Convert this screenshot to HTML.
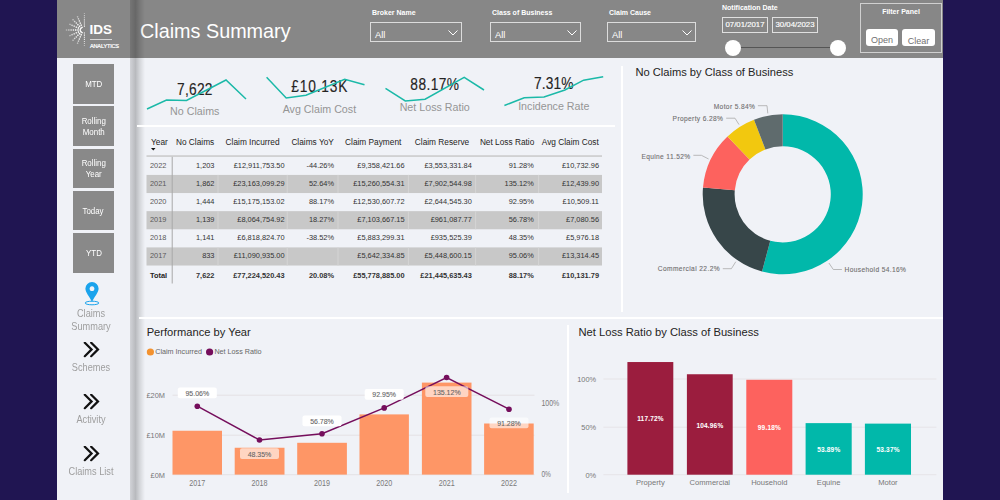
<!DOCTYPE html>
<html><head><meta charset="utf-8">
<style>
*{margin:0;padding:0;box-sizing:border-box}
html,body{width:1000px;height:500px;overflow:hidden;background:#201552;font-family:"Liberation Sans",sans-serif;position:relative}
.a{position:absolute;white-space:nowrap}
.btn{position:absolute;left:73px;width:41px;height:39.5px;background:#898989;color:#fff;font-size:9px;text-align:center;display:flex;align-items:center;justify-content:center;line-height:10.6px;padding-top:1px}.btn span{display:block;transform:scaleX(0.88)}
.nav{position:absolute;left:57px;width:68px;text-align:center;color:#9e9e9e;font-size:10.5px;line-height:13px;transform:scaleX(0.875);transform-origin:34px 0}
.sl{position:absolute;color:#fff;font-size:7px;font-weight:bold;white-space:nowrap}
.dd{position:absolute;height:20px;border:1px solid #dcdcdc;color:#fff;font-size:9.4px;padding:5.5px 0 0 4px}
.dd svg{position:absolute;right:3px;top:6.5px}
.wl{position:absolute;background:#fff}
.kv{position:absolute;color:#252423;font-size:15px;text-align:center;white-space:nowrap}
.kl{position:absolute;color:#8c8c8c;font-size:11px;text-align:center;white-space:nowrap}
.title{position:absolute;font-size:12px;color:#252423;white-space:nowrap}
.ax{position:absolute;font-size:8px;color:#777;white-space:nowrap}
</style></head><body>
<div class="a" style="left:57px;top:0;width:886px;height:500px;background:#f0f2f7"></div>
<div class="a" style="left:57px;top:0;width:886px;height:58px;background:#878787"></div>

<!-- logo -->
<svg class="a" style="left:62px;top:5px" width="65" height="50" viewBox="62 5 65 50">
  <g fill="#fff">
    <text x="89.5" y="33.6" font-family="Liberation Sans" font-weight="bold" font-size="12" textLength="22.5" lengthAdjust="spacingAndGlyphs">IDS</text>
    <rect x="90" y="39" width="22" height="0.8" opacity="0.85"/>
    <text x="90" y="48" font-family="Liberation Sans" font-size="5.6" letter-spacing="-0.2" stroke="#fff" stroke-width="0.2">ANALYTICS</text>
  </g>
  <defs><radialGradient id="rg" cx="83.2" cy="30" r="18" gradientUnits="userSpaceOnUse"><stop offset="0" stop-color="#fff"/><stop offset="0.4" stop-color="#fff"/><stop offset="1" stop-color="#fff" stop-opacity="0.3"/></radialGradient>
<mask id="mk"><rect x="62" y="5" width="30" height="50" fill="url(#rg)"/></mask></defs>
<g mask="url(#mk)" stroke="#fff" fill="none">
<g stroke-width="1.4" stroke-dasharray="1.4 0.9"><line x1="81.00" y1="30.00" x2="65.70" y2="30.00"/><line x1="81.17" y1="29.14" x2="69.39" y2="24.14"/><line x1="81.64" y1="28.44" x2="71.89" y2="18.69"/><line x1="82.34" y1="27.97" x2="77.34" y2="16.19"/><line x1="81.17" y1="30.86" x2="69.39" y2="35.86"/><line x1="81.64" y1="31.56" x2="71.89" y2="41.31"/><line x1="82.34" y1="32.03" x2="77.34" y2="43.81"/></g>
<line x1="84.4" y1="13" x2="84.4" y2="27.5" stroke-width="1.1" stroke-dasharray="1.1 1"/>
<line x1="84.4" y1="32.5" x2="84.4" y2="46" stroke-width="1.1" stroke-dasharray="1.1 1"/>
</g>
</svg>
<div class="a" style="left:140px;top:20px;font-size:19.8px;color:#fff">Claims Summary</div>

<div class="sl" style="left:372px;top:9px">Broker Name</div>
<div class="dd" style="left:370px;top:22px;width:92px">All<svg width="10" height="6" viewBox="0 0 10 6"><path d="M0.5 0.5 L5 5 L9.5 0.5" stroke="#fff" fill="none" stroke-width="1"/></svg></div>
<div class="sl" style="left:492px;top:9px">Class of Business</div>
<div class="dd" style="left:490px;top:22px;width:91px">All<svg width="10" height="6" viewBox="0 0 10 6"><path d="M0.5 0.5 L5 5 L9.5 0.5" stroke="#fff" fill="none" stroke-width="1"/></svg></div>
<div class="sl" style="left:609px;top:9px">Claim Cause</div>
<div class="dd" style="left:607px;top:22px;width:89px">All<svg width="10" height="6" viewBox="0 0 10 6"><path d="M0.5 0.5 L5 5 L9.5 0.5" stroke="#fff" fill="none" stroke-width="1"/></svg></div>

<div class="sl" style="left:722px;top:4px">Notification Date</div>
<div class="a" style="left:722px;top:17px;width:46px;height:16px;border:1px solid #e0e0e0;color:#fff;font-size:7.8px;text-align:center;line-height:14px;-webkit-text-stroke:0.15px #fff">07/01/2017</div>
<div class="a" style="left:772px;top:17px;width:46px;height:16px;border:1px solid #e0e0e0;color:#fff;font-size:7.8px;text-align:center;line-height:14px;-webkit-text-stroke:0.15px #fff">30/04/2023</div>
<div class="a" style="left:733px;top:47px;width:105px;height:1px;background:#555"></div>
<div class="a" style="left:725px;top:40px;width:16px;height:16px;border-radius:50%;background:#fff"></div>
<div class="a" style="left:830px;top:40px;width:16px;height:16px;border-radius:50%;background:#fff"></div>

<div class="a" style="left:860px;top:3px;width:82px;height:50px;border:1px solid #d0d0d0"></div>
<div class="sl" style="left:860px;top:8px;width:82px;text-align:center">Filter Panel</div>
<div class="a" style="left:866px;top:29px;width:32px;height:17px;background:#fff;border-radius:3px;color:#707070;font-size:9px;text-align:center;line-height:22px;overflow:hidden">Open</div>
<div class="a" style="left:902px;top:29px;width:33px;height:17px;background:#fff;border-radius:3px;color:#707070;font-size:9px;text-align:center;line-height:24px;overflow:hidden">Clear</div>

<!-- sidebar -->
<div class="btn" style="top:64px"><span>MTD</span></div>
<div class="btn" style="top:106.3px"><span>Rolling<br>Month</span></div>
<div class="btn" style="top:148.6px"><span>Rolling<br>Year</span></div>
<div class="btn" style="top:190.9px"><span>Today</span></div>
<div class="btn" style="top:233.2px"><span>YTD</span></div>
<svg class="a" style="left:82px;top:280px" width="20" height="26" viewBox="82 280 20 26">
  <path d="M92 282 a6.6 6.6 0 0 1 6.6 6.6 c0 4 -4 8 -6.6 13.4 c-2.6 -5.4 -6.6 -9.4 -6.6 -13.4 a6.6 6.6 0 0 1 6.6 -6.6z M92 286.3 a2.4 2.4 0 1 0 0.01 0z" fill="#1aa3ec" fill-rule="evenodd"/>
  <ellipse cx="92" cy="303" rx="6.9" ry="1.8" stroke="#1aa3ec" stroke-width="1" fill="none"/>
</svg>
<div class="nav" style="top:306.5px">Claims<br>Summary</div>
<svg class="a" style="left:83px;top:342px" width="18" height="16" viewBox="0 0 18 16"><path d="M1.8 0.7 L8.6 7.4 L1.8 14.2 M8.2 0.7 L15 7.4 L8.2 14.2" stroke="#111" stroke-width="2.2" stroke-linecap="round" fill="none"/></svg>
<div class="nav" style="top:361px">Schemes</div>
<svg class="a" style="left:83px;top:394px" width="18" height="16" viewBox="0 0 18 16"><path d="M1.8 0.7 L8.6 7.4 L1.8 14.2 M8.2 0.7 L15 7.4 L8.2 14.2" stroke="#111" stroke-width="2.2" stroke-linecap="round" fill="none"/></svg>
<div class="nav" style="top:413px">Activity</div>
<svg class="a" style="left:83px;top:446px" width="18" height="16" viewBox="0 0 18 16"><path d="M1.8 0.7 L8.6 7.4 L1.8 14.2 M8.2 0.7 L15 7.4 L8.2 14.2" stroke="#111" stroke-width="2.2" stroke-linecap="round" fill="none"/></svg>
<div class="nav" style="top:465px">Claims List</div>

<!-- shadow -->
<div class="a" style="left:130px;top:0;width:16px;height:500px;background:linear-gradient(to right,rgba(0,0,0,0.13),rgba(0,0,0,0.23) 5.5px,rgba(0,0,0,0.12) 9.5px,rgba(0,0,0,0) 15px)"></div>

<!-- separators -->
<div class="wl" style="left:137px;top:125px;width:478px;height:2px"></div>
<div class="wl" style="left:621px;top:66px;width:2px;height:246px"></div>
<div class="wl" style="left:139px;top:317px;width:804px;height:2px"></div>
<div class="wl" style="left:567px;top:325px;width:2px;height:168px"></div>

<!--CONTENT-->
<svg class="a" style="left:0;top:0" width="1000" height="500" viewBox="0 0 1000 500" font-family="Liberation Sans">
<text transform="translate(177.00,94.5) scale(0.86,1)" x="0" y="0" font-size="16" letter-spacing="0.310" fill="#252423" stroke="#252423" stroke-width="0.15">7,622</text>
<polyline points="147,109 166.5,100 186.5,100.5 226,80 246,99" fill="none" stroke="#1bb9a8" stroke-width="1.5" stroke-linejoin="miter"/>
<text x="194.75" y="115.3" text-anchor="middle" font-size="10.7" fill="#959595">No Claims</text>
<text transform="translate(291.30,92) scale(0.86,1)" x="0" y="0" font-size="16" letter-spacing="0.957" fill="#252423" stroke="#252423" stroke-width="0.15">£10.13K</text>
<polyline points="266.6,77.3 286.2,98 306,95.25 344.7,79.3 364.5,84.8" fill="none" stroke="#1bb9a8" stroke-width="1.5" stroke-linejoin="miter"/>
<text x="319.4" y="112.8" text-anchor="middle" font-size="10.7" fill="#959595">Avg Claim Cost</text>
<text transform="translate(410.32,89.5) scale(0.86,1)" x="0" y="0" font-size="16" letter-spacing="0.484" fill="#252423" stroke="#252423" stroke-width="0.15">88.17%</text>
<polyline points="385.5,88.4 405.3,101 425.1,99.2 464.2,77.4 484,90" fill="none" stroke="#1bb9a8" stroke-width="1.5" stroke-linejoin="miter"/>
<text x="434.7" y="110.6" text-anchor="middle" font-size="10.7" fill="#959595">Net Loss Ratio</text>
<text transform="translate(534.10,89) scale(0.86,1)" x="0" y="0" font-size="16" letter-spacing="0.112" fill="#252423" stroke="#252423" stroke-width="0.15">7.31%</text>
<polyline points="504.4,105.5 524.2,97.75 544,97 564.9,90 583.6,80.2 603.2,76.85" fill="none" stroke="#1bb9a8" stroke-width="1.5" stroke-linejoin="miter"/>
<text x="553.8" y="110.2" text-anchor="middle" font-size="10.7" fill="#959595">Incidence Rate</text>
<rect x="146.5" y="155.3" width="455.5" height="1.5" fill="#c9c9c9"/>
<rect x="146.5" y="174.92" width="455.5" height="18.12" fill="#c8c8c8"/>
<rect x="217.5" y="174.92" width="1" height="18.12" fill="#d4d4d4"/>
<rect x="286.7" y="174.92" width="1" height="18.12" fill="#d4d4d4"/>
<rect x="337.5" y="174.92" width="1" height="18.12" fill="#d4d4d4"/>
<rect x="407.9" y="174.92" width="1" height="18.12" fill="#d4d4d4"/>
<rect x="475.1" y="174.92" width="1" height="18.12" fill="#d4d4d4"/>
<rect x="538.1" y="174.92" width="1" height="18.12" fill="#d4d4d4"/>
<rect x="146.5" y="211.16" width="455.5" height="18.12" fill="#c8c8c8"/>
<rect x="217.5" y="211.16" width="1" height="18.12" fill="#d4d4d4"/>
<rect x="286.7" y="211.16" width="1" height="18.12" fill="#d4d4d4"/>
<rect x="337.5" y="211.16" width="1" height="18.12" fill="#d4d4d4"/>
<rect x="407.9" y="211.16" width="1" height="18.12" fill="#d4d4d4"/>
<rect x="475.1" y="211.16" width="1" height="18.12" fill="#d4d4d4"/>
<rect x="538.1" y="211.16" width="1" height="18.12" fill="#d4d4d4"/>
<rect x="146.5" y="247.40" width="455.5" height="18.12" fill="#c8c8c8"/>
<rect x="217.5" y="247.40" width="1" height="18.12" fill="#d4d4d4"/>
<rect x="286.7" y="247.40" width="1" height="18.12" fill="#d4d4d4"/>
<rect x="337.5" y="247.40" width="1" height="18.12" fill="#d4d4d4"/>
<rect x="407.9" y="247.40" width="1" height="18.12" fill="#d4d4d4"/>
<rect x="475.1" y="247.40" width="1" height="18.12" fill="#d4d4d4"/>
<rect x="538.1" y="247.40" width="1" height="18.12" fill="#d4d4d4"/>
<rect x="171.7" y="156.8" width="1" height="126.7" fill="#a8a8a8"/>
<text x="151" y="145" font-size="8.3" fill="#252423">Year</text>
<text x="195.1" y="145" text-anchor="middle" font-size="8.3" fill="#252423">No Claims</text>
<text x="252.6" y="145" text-anchor="middle" font-size="8.3" fill="#252423">Claim Incurred</text>
<text x="312.6" y="145" text-anchor="middle" font-size="8.3" fill="#252423">Claims YoY</text>
<text x="373.2" y="145" text-anchor="middle" font-size="8.3" fill="#252423">Claim Payment</text>
<text x="442.0" y="145" text-anchor="middle" font-size="8.3" fill="#252423">Claim Reserve</text>
<text x="507.1" y="145" text-anchor="middle" font-size="8.3" fill="#252423">Net Loss Ratio</text>
<text x="570.3" y="145" text-anchor="middle" font-size="8.3" fill="#252423">Avg Claim Cost</text>
<path d="M151 148 L155.5 148 L153.25 150.6 Z" fill="#111"/>
<text x="150" y="167.70" font-size="8" textLength="16.46" lengthAdjust="spacingAndGlyphs" fill="#5a5a5a">2022</text>
<text x="195.98" y="167.70" font-size="8" textLength="18.52" lengthAdjust="spacingAndGlyphs" fill="#333">1,203</text>
<text x="233.72" y="167.70" font-size="8" textLength="50.88" lengthAdjust="spacingAndGlyphs" fill="#333">£12,911,753.50</text>
<text x="306.44" y="167.70" font-size="8" textLength="27.56" lengthAdjust="spacingAndGlyphs" fill="#333">-44.26%</text>
<text x="357.28" y="167.70" font-size="8" textLength="47.32" lengthAdjust="spacingAndGlyphs" fill="#333">£9,358,421.66</text>
<text x="424.48" y="167.70" font-size="8" textLength="47.32" lengthAdjust="spacingAndGlyphs" fill="#333">£3,553,331.84</text>
<text x="508.70" y="167.70" font-size="8" textLength="25.10" lengthAdjust="spacingAndGlyphs" fill="#333">91.28%</text>
<text x="561.97" y="167.70" font-size="8" textLength="37.03" lengthAdjust="spacingAndGlyphs" fill="#333">£10,732.96</text>
<text x="150" y="185.82" font-size="8" textLength="16.46" lengthAdjust="spacingAndGlyphs" fill="#5a5a5a">2021</text>
<text x="195.98" y="185.82" font-size="8" textLength="18.52" lengthAdjust="spacingAndGlyphs" fill="#333">1,862</text>
<text x="233.17" y="185.82" font-size="8" textLength="51.43" lengthAdjust="spacingAndGlyphs" fill="#333">£23,163,099.29</text>
<text x="308.90" y="185.82" font-size="8" textLength="25.10" lengthAdjust="spacingAndGlyphs" fill="#333">52.64%</text>
<text x="353.17" y="185.82" font-size="8" textLength="51.43" lengthAdjust="spacingAndGlyphs" fill="#333">£15,260,554.31</text>
<text x="424.48" y="185.82" font-size="8" textLength="47.32" lengthAdjust="spacingAndGlyphs" fill="#333">£7,902,544.98</text>
<text x="504.59" y="185.82" font-size="8" textLength="29.21" lengthAdjust="spacingAndGlyphs" fill="#333">135.12%</text>
<text x="561.97" y="185.82" font-size="8" textLength="37.03" lengthAdjust="spacingAndGlyphs" fill="#333">£12,439.90</text>
<text x="150" y="203.94" font-size="8" textLength="16.46" lengthAdjust="spacingAndGlyphs" fill="#5a5a5a">2020</text>
<text x="195.98" y="203.94" font-size="8" textLength="18.52" lengthAdjust="spacingAndGlyphs" fill="#333">1,444</text>
<text x="233.17" y="203.94" font-size="8" textLength="51.43" lengthAdjust="spacingAndGlyphs" fill="#333">£15,175,153.02</text>
<text x="308.90" y="203.94" font-size="8" textLength="25.10" lengthAdjust="spacingAndGlyphs" fill="#333">88.17%</text>
<text x="353.17" y="203.94" font-size="8" textLength="51.43" lengthAdjust="spacingAndGlyphs" fill="#333">£12,530,607.72</text>
<text x="424.48" y="203.94" font-size="8" textLength="47.32" lengthAdjust="spacingAndGlyphs" fill="#333">£2,644,545.30</text>
<text x="508.70" y="203.94" font-size="8" textLength="25.10" lengthAdjust="spacingAndGlyphs" fill="#333">92.95%</text>
<text x="562.52" y="203.94" font-size="8" textLength="36.48" lengthAdjust="spacingAndGlyphs" fill="#333">£10,509.11</text>
<text x="150" y="222.06" font-size="8" textLength="16.46" lengthAdjust="spacingAndGlyphs" fill="#5a5a5a">2019</text>
<text x="195.98" y="222.06" font-size="8" textLength="18.52" lengthAdjust="spacingAndGlyphs" fill="#333">1,139</text>
<text x="237.28" y="222.06" font-size="8" textLength="47.32" lengthAdjust="spacingAndGlyphs" fill="#333">£8,064,754.92</text>
<text x="308.90" y="222.06" font-size="8" textLength="25.10" lengthAdjust="spacingAndGlyphs" fill="#333">18.27%</text>
<text x="357.28" y="222.06" font-size="8" textLength="47.32" lengthAdjust="spacingAndGlyphs" fill="#333">£7,103,667.15</text>
<text x="430.65" y="222.06" font-size="8" textLength="41.15" lengthAdjust="spacingAndGlyphs" fill="#333">£961,087.77</text>
<text x="508.70" y="222.06" font-size="8" textLength="25.10" lengthAdjust="spacingAndGlyphs" fill="#333">56.78%</text>
<text x="566.08" y="222.06" font-size="8" textLength="32.92" lengthAdjust="spacingAndGlyphs" fill="#333">£7,080.56</text>
<text x="150" y="240.18" font-size="8" textLength="16.46" lengthAdjust="spacingAndGlyphs" fill="#5a5a5a">2018</text>
<text x="195.98" y="240.18" font-size="8" textLength="18.52" lengthAdjust="spacingAndGlyphs" fill="#333">1,141</text>
<text x="237.28" y="240.18" font-size="8" textLength="47.32" lengthAdjust="spacingAndGlyphs" fill="#333">£6,818,824.70</text>
<text x="306.44" y="240.18" font-size="8" textLength="27.56" lengthAdjust="spacingAndGlyphs" fill="#333">-38.52%</text>
<text x="357.28" y="240.18" font-size="8" textLength="47.32" lengthAdjust="spacingAndGlyphs" fill="#333">£5,883,299.31</text>
<text x="430.65" y="240.18" font-size="8" textLength="41.15" lengthAdjust="spacingAndGlyphs" fill="#333">£935,525.39</text>
<text x="508.70" y="240.18" font-size="8" textLength="25.10" lengthAdjust="spacingAndGlyphs" fill="#333">48.35%</text>
<text x="566.08" y="240.18" font-size="8" textLength="32.92" lengthAdjust="spacingAndGlyphs" fill="#333">£5,976.18</text>
<text x="150" y="258.30" font-size="8" textLength="16.46" lengthAdjust="spacingAndGlyphs" fill="#5a5a5a">2017</text>
<text x="202.15" y="258.30" font-size="8" textLength="12.35" lengthAdjust="spacingAndGlyphs" fill="#333">833</text>
<text x="233.72" y="258.30" font-size="8" textLength="50.88" lengthAdjust="spacingAndGlyphs" fill="#333">£11,090,935.00</text>
<text x="357.28" y="258.30" font-size="8" textLength="47.32" lengthAdjust="spacingAndGlyphs" fill="#333">£5,642,334.85</text>
<text x="424.48" y="258.30" font-size="8" textLength="47.32" lengthAdjust="spacingAndGlyphs" fill="#333">£5,448,600.15</text>
<text x="508.70" y="258.30" font-size="8" textLength="25.10" lengthAdjust="spacingAndGlyphs" fill="#333">95.06%</text>
<text x="561.97" y="258.30" font-size="8" textLength="37.03" lengthAdjust="spacingAndGlyphs" fill="#333">£13,314.45</text>
<text x="150" y="277.62" font-size="8" textLength="17.13" lengthAdjust="spacingAndGlyphs" fill="#252423" font-weight="bold">Total</text>
<text x="195.98" y="277.62" font-size="8" textLength="18.52" lengthAdjust="spacingAndGlyphs" fill="#333" font-weight="bold">7,622</text>
<text x="233.17" y="277.62" font-size="8" textLength="51.43" lengthAdjust="spacingAndGlyphs" fill="#333" font-weight="bold">£77,224,520.43</text>
<text x="308.90" y="277.62" font-size="8" textLength="25.10" lengthAdjust="spacingAndGlyphs" fill="#333" font-weight="bold">20.08%</text>
<text x="353.17" y="277.62" font-size="8" textLength="51.43" lengthAdjust="spacingAndGlyphs" fill="#333" font-weight="bold">£55,778,885.00</text>
<text x="420.37" y="277.62" font-size="8" textLength="51.43" lengthAdjust="spacingAndGlyphs" fill="#333" font-weight="bold">£21,445,635.43</text>
<text x="508.70" y="277.62" font-size="8" textLength="25.10" lengthAdjust="spacingAndGlyphs" fill="#333" font-weight="bold">88.17%</text>
<text x="561.97" y="277.62" font-size="8" textLength="37.03" lengthAdjust="spacingAndGlyphs" fill="#333" font-weight="bold">£10,131.79</text>
<path d="M782.70 114.30 A80 80 0 1 1 762.03 271.58 L770.27 240.77 A48.1 48.1 0 1 0 782.70 146.20 Z" fill="#01b8aa"/>
<path d="M762.03 271.58 A80 80 0 0 1 702.99 187.47 L734.78 190.19 A48.1 48.1 0 0 0 770.27 240.77 Z" fill="#374649"/>
<path d="M702.99 187.47 A80 80 0 0 1 727.50 136.40 L749.51 159.49 A48.1 48.1 0 0 0 734.78 190.19 Z" fill="#fd625e"/>
<path d="M727.50 136.40 A80 80 0 0 1 754.00 119.63 L765.44 149.40 A48.1 48.1 0 0 0 749.51 159.49 Z" fill="#f2c80f"/>
<path d="M754.00 119.63 A80 80 0 0 1 782.70 114.30 L782.70 146.20 A48.1 48.1 0 0 0 765.44 149.40 Z" fill="#5f6b6d"/>
<text transform="translate(713.70,109) scale(0.84,1)" x="0" y="0" font-size="7.9" letter-spacing="0.438" fill="#707070" stroke="#707070" stroke-width="0.12">Motor 5.84%</text>
<polyline points="757.9,105.7 767,105.7 767.8,113.4" fill="none" stroke="#aaa" stroke-width="0.8"/>
<text transform="translate(672.60,121) scale(0.84,1)" x="0" y="0" font-size="7.9" letter-spacing="0.427" fill="#707070" stroke="#707070" stroke-width="0.12">Property 6.28%</text>
<polyline points="726.2,118.2 735,118.2 739,124.6" fill="none" stroke="#aaa" stroke-width="0.8"/>
<text transform="translate(641.40,158.6) scale(0.84,1)" x="0" y="0" font-size="7.9" letter-spacing="0.425" fill="#707070" stroke="#707070" stroke-width="0.12">Equine 11.52%</text>
<polyline points="693.4,155.3 701.4,155.3 708.6,159" fill="none" stroke="#aaa" stroke-width="0.8"/>
<text transform="translate(657.80,271.2) scale(0.84,1)" x="0" y="0" font-size="7.9" letter-spacing="0.464" fill="#707070" stroke="#707070" stroke-width="0.12">Commercial 22.2%</text>
<polyline points="722.8,268.7 731.4,268.7 735.8,261.7" fill="none" stroke="#aaa" stroke-width="0.8"/>
<text transform="translate(844.50,271.7) scale(0.84,1)" x="0" y="0" font-size="7.9" letter-spacing="0.438" fill="#707070" stroke="#707070" stroke-width="0.12">Household 54.16%</text>
<polyline points="828.9,263 833.3,269.5 841.9,269.5" fill="none" stroke="#aaa" stroke-width="0.8"/>
<text x="635.4" y="76.2" font-size="11.15" fill="#252423">No Claims by Class of Business</text>
<text x="146.7" y="336" font-size="11.15" fill="#252423">Performance by Year</text>
<circle cx="150.4" cy="352" r="3.6" fill="#f3922f"/>
<text x="155.2" y="354.4" font-size="7.2" fill="#666">Claim Incurred</text>
<circle cx="209.6" cy="352" r="3.6" fill="#750e5c"/>
<text x="214.4" y="354.4" font-size="7.2" fill="#666">Net Loss Ratio</text>
<rect x="172.5" y="394.7" width="362" height="1" fill="#e4e2e4"/>
<rect x="172.5" y="434.7" width="362" height="1" fill="#e4e2e4"/>
<rect x="172.5" y="474.2" width="362" height="1" fill="#e4e2e4"/>
<text x="165" y="398.25" text-anchor="end" font-size="7.4" fill="#777">£20M</text>
<text x="165" y="438" text-anchor="end" font-size="7.4" fill="#777">£10M</text>
<text x="165" y="477.5" text-anchor="end" font-size="7.4" fill="#777">£0M</text>
<text x="541.4" y="406.4" font-size="8.2" textLength="17.9" lengthAdjust="spacingAndGlyphs" fill="#7a7a7a">100%</text>
<text x="541.4" y="477.4" font-size="8.2" textLength="9.5" lengthAdjust="spacingAndGlyphs" fill="#7a7a7a">0%</text>
<rect x="172.5" y="430.75" width="49.5" height="43.85000000000002" fill="#fe9666"/>
<text x="189.25" y="485.6" font-size="8.6" textLength="16" lengthAdjust="spacingAndGlyphs" fill="#7a7a7a">2017</text>
<rect x="234.7" y="447.75" width="49.80000000000001" height="26.850000000000023" fill="#fe9666"/>
<text x="251.60" y="485.6" font-size="8.6" textLength="16" lengthAdjust="spacingAndGlyphs" fill="#7a7a7a">2018</text>
<rect x="297.2" y="442.8" width="49.69999999999999" height="31.80000000000001" fill="#fe9666"/>
<text x="314.05" y="485.6" font-size="8.6" textLength="16" lengthAdjust="spacingAndGlyphs" fill="#7a7a7a">2019</text>
<rect x="359.5" y="414.4" width="49.39999999999998" height="60.200000000000045" fill="#fe9666"/>
<text x="376.20" y="485.6" font-size="8.6" textLength="16" lengthAdjust="spacingAndGlyphs" fill="#7a7a7a">2020</text>
<rect x="421.9" y="382.6" width="49.60000000000002" height="92.0" fill="#fe9666"/>
<text x="438.70" y="485.6" font-size="8.6" textLength="16" lengthAdjust="spacingAndGlyphs" fill="#7a7a7a">2021</text>
<rect x="484.1" y="423.5" width="49.60000000000002" height="51.10000000000002" fill="#fe9666"/>
<text x="500.90" y="485.6" font-size="8.6" textLength="16" lengthAdjust="spacingAndGlyphs" fill="#7a7a7a">2022</text>
<polyline points="197.3,406.2 259.5,440 322,433.8 384.2,407.9 446.6,377.5 509,409.2" fill="none" stroke="#750e5c" stroke-width="1.5"/>
<circle cx="197.3" cy="406.2" r="2.8" fill="#750e5c"/>
<circle cx="259.5" cy="440" r="2.8" fill="#750e5c"/>
<circle cx="322" cy="433.8" r="2.8" fill="#750e5c"/>
<circle cx="384.2" cy="407.9" r="2.8" fill="#750e5c"/>
<circle cx="446.6" cy="377.5" r="2.8" fill="#750e5c"/>
<circle cx="509" cy="409.2" r="2.8" fill="#750e5c"/>
<rect x="177.8" y="387.5" width="39" height="10.8" rx="2" fill="#ffffff"/>
<text x="185.44" y="396.0" font-size="7.9" textLength="23.71" lengthAdjust="spacingAndGlyphs" fill="#666" stroke="#666" stroke-width="0.1">95.06%</text>
<rect x="240.0" y="448.25" width="39" height="10.8" rx="2" fill="rgba(255,255,255,0.6)"/>
<text x="247.64" y="456.75" font-size="7.9" textLength="23.71" lengthAdjust="spacingAndGlyphs" fill="#666" stroke="#666" stroke-width="0.1">48.35%</text>
<rect x="302.5" y="415.5" width="39" height="10.8" rx="2" fill="#ffffff"/>
<text x="310.14" y="424.0" font-size="7.9" textLength="23.71" lengthAdjust="spacingAndGlyphs" fill="#666" stroke="#666" stroke-width="0.1">56.78%</text>
<rect x="364.7" y="388.9" width="39" height="10.8" rx="2" fill="#ffffff"/>
<text x="372.34" y="397.4" font-size="7.9" textLength="23.71" lengthAdjust="spacingAndGlyphs" fill="#666" stroke="#666" stroke-width="0.1">92.95%</text>
<rect x="425.3" y="386.3" width="43" height="10.8" rx="2" fill="rgba(255,255,255,0.6)"/>
<text x="433.00" y="394.8" font-size="7.9" textLength="27.60" lengthAdjust="spacingAndGlyphs" fill="#666" stroke="#666" stroke-width="0.1">135.12%</text>
<rect x="489.5" y="417.5" width="39" height="10.8" rx="2" fill="rgba(255,255,255,0.6)"/>
<text x="497.14" y="426.0" font-size="7.9" textLength="23.71" lengthAdjust="spacingAndGlyphs" fill="#666" stroke="#666" stroke-width="0.1">91.28%</text>
<text x="578.5" y="336.4" font-size="11.2" fill="#252423">Net Loss Ratio by Class of Business</text>
<rect x="603.4" y="378.5" width="333" height="1" fill="#e6e4e8"/>
<rect x="603.4" y="426.7" width="333" height="1" fill="#e6e4e8"/>
<rect x="603.4" y="474.2" width="333" height="1" fill="#e6e4e8"/>
<text x="596.1" y="382" text-anchor="end" font-size="7.4" fill="#777">100%</text>
<text x="596.1" y="430" text-anchor="end" font-size="7.4" fill="#777">50%</text>
<text x="596.1" y="478.2" text-anchor="end" font-size="7.4" fill="#777">0%</text>
<rect x="627.4" y="362.04" width="45.90" height="112.66" fill="#9b1d3e"/>
<text transform="translate(637.14,421.47) scale(0.82,1)" x="0" y="0" font-size="7.9" letter-spacing="0.246" fill="#fff" stroke="#fff" stroke-width="0.05" font-weight="bold">117.72%</text>
<text x="650.3499999999999" y="485" text-anchor="middle" font-size="7.6" fill="#777">Property</text>
<rect x="686.9" y="374.25" width="45.80" height="100.45" fill="#9b1d3e"/>
<text transform="translate(696.40,427.58) scale(0.82,1)" x="0" y="0" font-size="7.9" letter-spacing="0.250" fill="#fff" stroke="#fff" stroke-width="0.05" font-weight="bold">104.96%</text>
<text x="709.8" y="485" text-anchor="middle" font-size="7.6" fill="#777">Commercial</text>
<rect x="746.3" y="379.78" width="46.00" height="94.92" fill="#fd625e"/>
<text transform="translate(757.79,430.34) scale(0.82,1)" x="0" y="0" font-size="7.9" letter-spacing="0.257" fill="#fff" stroke="#fff" stroke-width="0.05" font-weight="bold">99.18%</text>
<text x="769.3" y="485" text-anchor="middle" font-size="7.6" fill="#777">Household</text>
<rect x="805.6" y="423.13" width="46.10" height="51.57" fill="#01b8aa"/>
<text transform="translate(817.14,452.01) scale(0.82,1)" x="0" y="0" font-size="7.9" letter-spacing="0.257" fill="#fff" stroke="#fff" stroke-width="0.05" font-weight="bold">53.89%</text>
<text x="828.6500000000001" y="485" text-anchor="middle" font-size="7.6" fill="#777">Equine</text>
<rect x="864.9" y="423.62" width="46.10" height="51.08" fill="#01b8aa"/>
<text transform="translate(876.44,452.26) scale(0.82,1)" x="0" y="0" font-size="7.9" letter-spacing="0.257" fill="#fff" stroke="#fff" stroke-width="0.05" font-weight="bold">53.37%</text>
<text x="887.95" y="485" text-anchor="middle" font-size="7.6" fill="#777">Motor</text>
</svg>
<!--/CONTENT-->
</body></html>
